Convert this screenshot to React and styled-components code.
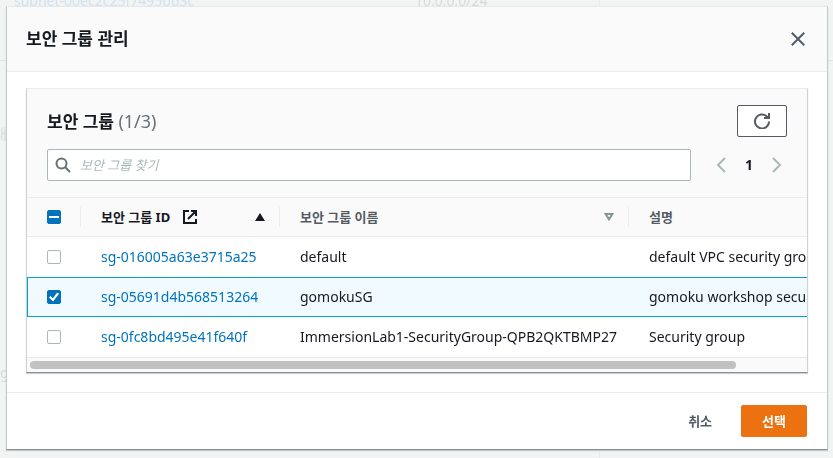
import { useRef, useState } from "react";
import styled, { createGlobalStyle, css } from "styled-components";

const groups = [
  {
    id: "sg-016005a63e3715a25",
    name: "default",
    description: "default VPC security group",
  },
  {
    id: "sg-05691d4b568513264",
    name: "gomokuSG",
    description: "gomoku workshop security group",
  },
  {
    id: "sg-0fc8bd495e41f640f",
    name: "ImmersionLab1-SecurityGroup-QPB2QKTBMP27",
    description: "Security group",
  },
];

export default function App() {
  const [selected, setSelected] = useState(["sg-05691d4b568513264"]);
  const [scroll, setScroll] = useState(0);
  const scroller = useRef(null);

  const toggle = (id) => {
    setSelected((prev) =>
      prev.includes(id) ? prev.filter((item) => item !== id) : [...prev, id]
    );
  };

  const toggleAll = () => {
    setSelected((prev) =>
      prev.length === groups.length ? [] : groups.map((group) => group.id)
    );
  };

  const allSelected = selected.length === groups.length;

  return (
    <>
      <GlobalStyle />
      <Backdrop aria-hidden="true">
        <BackdropRow>
          <BackdropLink>subnet-00ec2c25f7495bd3c</BackdropLink>
          <span>10.0.0.0/24</span>
          <BackdropDivider />
        </BackdropRow>
        <BackdropLabels>
          <span>대</span>
          <span>g</span>
        </BackdropLabels>
      </Backdrop>
      <Overlay>
        <Modal role="dialog" aria-labelledby="modal-title">
          <ModalHeader>
            <Title id="modal-title">보안 그룹 관리</Title>
            <IconButton aria-label="닫기">
              <svg width="16" height="16" viewBox="0 0 16 16">
                <path d="M1.8 1.8l12.4 12.4M14.2 1.8L1.8 14.2" {...stroke} />
              </svg>
            </IconButton>
          </ModalHeader>
          <ModalBody>
            <Card>
              <CardHeader>
                <TitleRow>
                  <Title>
                    보안 그룹 <Counter>({selected.length}/3)</Counter>
                  </Title>
                  <RefreshButton aria-label="새로 고침">
                    <svg width="16" height="16" viewBox="0 0 16 16">
                      <path
                        d="M15 8.5A7 7 0 1 1 12.6 3.2L14 4.6M15 0v5h-5"
                        {...stroke}
                      />
                    </svg>
                  </RefreshButton>
                </TitleRow>
                <FilterRow>
                  <SearchBox>
                    <svg width="16" height="16" viewBox="0 0 16 16">
                      <circle cx="6.5" cy="6.5" r="5" {...stroke} />
                      <path d="M10.2 10.2L15 15" {...stroke} />
                    </svg>
                    <input
                      type="text"
                      aria-label="보안 그룹 찾기"
                      placeholder="보안 그룹 찾기"
                    />
                  </SearchBox>
                  <Pagination aria-label="페이지">
                    <PageButton aria-label="이전" disabled>
                      <svg width="16" height="16" viewBox="0 0 16 16">
                        <path d="M12 1L5 8l7 7" {...stroke} />
                      </svg>
                    </PageButton>
                    <PageNumber>1</PageNumber>
                    <PageButton aria-label="다음" disabled>
                      <svg width="16" height="16" viewBox="0 0 16 16">
                        <path d="M4 1l7 7-7 7" {...stroke} />
                      </svg>
                    </PageButton>
                  </Pagination>
                </FilterRow>
              </CardHeader>
              <TableScroller
                ref={scroller}
                onScroll={() => {
                  const { scrollLeft, scrollWidth } = scroller.current;
                  setScroll((scrollLeft / scrollWidth) * 100);
                }}
              >
                <Table>
                  <colgroup>
                    <Col $width={53} />
                    <Col $width={199} />
                    <Col $width={349} />
                    <col />
                  </colgroup>
                  <thead>
                    <tr>
                      <HeadCell>
                        <Checkbox
                          type="checkbox"
                          aria-label="모두 선택"
                          checked={allSelected}
                          onChange={toggleAll}
                          $mixed={selected.length > 0 && !allSelected}
                        />
                      </HeadCell>
                      <HeadCell $divided $active aria-sort="ascending">
                        <HeadContent>
                          <span>보안 그룹 ID</span>
                          <svg width="16" height="16" viewBox="0 0 16 16">
                            <path
                              d="M7 2H2v12h12V10M9 2h5v5M14 2L6 10"
                              {...stroke}
                            />
                          </svg>
                          <SortIcon width="10" height="8" viewBox="0 0 10 8">
                            <path d="M5 0l5 8H0z" fill="currentColor" />
                          </SortIcon>
                        </HeadContent>
                      </HeadCell>
                      <HeadCell $divided>
                        <HeadContent>
                          <span>보안 그룹 이름</span>
                          <SortIcon width="10" height="8" viewBox="0 0 10 8">
                            <path
                              d="M1.6 1h6.8L5 6.4z"
                              fill="none"
                              stroke="#879596"
                              strokeWidth="2"
                            />
                          </SortIcon>
                        </HeadContent>
                      </HeadCell>
                      <HeadCell $divided>설명</HeadCell>
                    </tr>
                  </thead>
                  <tbody>
                    {groups.map((group) => (
                      <Row
                        key={group.id}
                        $selected={selected.includes(group.id)}
                      >
                        <Cell>
                          <Checkbox
                            type="checkbox"
                            aria-label={group.id}
                            checked={selected.includes(group.id)}
                            onChange={() => toggle(group.id)}
                          />
                        </Cell>
                        <Cell>
                          <GroupLink href={`#${group.id}`}>{group.id}</GroupLink>
                        </Cell>
                        <Cell>{group.name}</Cell>
                        <Cell>{group.description}</Cell>
                      </Row>
                    ))}
                  </tbody>
                </Table>
              </TableScroller>
              <ScrollTrack>
                <ScrollThumb style={{ marginLeft: `${scroll}%` }} />
              </ScrollTrack>
            </Card>
          </ModalBody>
          <ModalFooter>
            <Button>취소</Button>
            <Button $primary>선택</Button>
          </ModalFooter>
        </Modal>
      </Overlay>
    </>
  );
}

const stroke = {
  fill: "none",
  stroke: "currentColor",
  strokeWidth: 2,
};

const GlobalStyle = createGlobalStyle`
  * {
    box-sizing: border-box;
  }
  body {
    margin: 0;
    background-color: #f2f3f3;
    color: #16191f;
    font-family: "Noto Sans", "Noto Sans CJK KR", sans-serif;
    font-size: 14px;
    line-height: 20px;
  }
  button,
  input {
    font: inherit;
  }
  svg {
    display: block;
    flex-shrink: 0;
  }
`;

const Backdrop = styled.div`
  position: fixed;
  inset: 0;
  overflow: hidden;
  color: #d5dbdb;
`;

const BackdropRow = styled.div`
  display: grid;
  grid-template-columns: 401px 184px 1fr;
  height: 61px;
  padding-left: 14px;
  border-bottom: 1px solid #e0e4e4;
  line-height: 2px;
`;

const BackdropLink = styled.span`
  color: #cfe2f0;
`;

const BackdropDivider = styled.div`
  height: 100vh;
  border-left: 1px solid #e9ebeb;
`;

const BackdropLabels = styled.div`
  display: flex;
  flex-direction: column;
  gap: 219px;
  padding-top: 63px;
  span:first-child {
    margin-left: -6px;
  }
`;

const Overlay = styled.div`
  position: relative;
  padding: 6px 5px 8px 6px;
`;

const Modal = styled.section`
  background-color: #ffffff;
  border: 1px solid #c4cbcb;
  border-top-color: #e3e8e8;
  border-bottom-color: #879196;
  box-shadow: 0 1px 1px rgba(0, 28, 36, 0.2);
`;

const ModalHeader = styled.header`
  display: flex;
  align-items: center;
  justify-content: space-between;
  height: 65px;
  padding: 0 21px 0 19px;
  background-color: #fafafa;
  border-bottom: 1px solid #eaeded;
`;

const Title = styled.h2`
  margin: 0;
  font-size: 17px;
  line-height: 24px;
  font-weight: 700;
`;

const Counter = styled.span`
  color: #687078;
  font-size: 18px;
  font-weight: 400;
`;

const IconButton = styled.button`
  padding: 0;
  border: 0;
  background: none;
  color: #545b64;
  cursor: pointer;
`;

const ModalBody = styled.div`
  padding: 16px 19px 19px;
`;

const Card = styled.div`
  border: 1px solid #cdd2d2;
  border-top-color: #eaeded;
  border-bottom-color: #879196;
  box-shadow: 0 1px 1px rgba(0, 28, 36, 0.2);
`;

const CardHeader = styled.div`
  padding: 16px 20px;
  background-color: #fafafa;
  border-bottom: 1px solid #eaeded;
`;

const TitleRow = styled.div`
  display: flex;
  align-items: center;
  justify-content: space-between;
  margin-bottom: 12px;
`;

const RefreshButton = styled.button`
  display: flex;
  align-items: center;
  justify-content: center;
  width: 50px;
  height: 32px;
  border: 1px solid #545b64;
  border-radius: 2px;
  background-color: #ffffff;
  color: #545b64;
  cursor: pointer;
`;

const FilterRow = styled.div`
  display: flex;
  align-items: center;
  gap: 20px;
`;

const SearchBox = styled.label`
  display: flex;
  flex: 1;
  align-items: center;
  gap: 9px;
  height: 32px;
  padding: 0 7px;
  border: 1px solid #aab7b8;
  border-radius: 2px;
  background-color: #ffffff;
  color: #687078;
  input {
    flex: 1;
    min-width: 0;
    padding: 0;
    border: 0;
    outline: 0;
    background: none;
    color: #16191f;
    font-size: 13px;
  }
  input::placeholder {
    color: #aab7b8;
    font-style: italic;
    opacity: 1;
  }
`;

const Pagination = styled.nav`
  display: flex;
  align-items: center;
  justify-content: space-between;
  width: 76px;
  padding: 0 2px;
`;

const PageButton = styled(IconButton)`
  color: #aab7b8;
`;

const PageNumber = styled.span`
  font-weight: 700;
`;

const TableScroller = styled.div`
  overflow-x: auto;
  scrollbar-width: none;
`;

const Table = styled.table`
  width: 100%;
  min-width: 855px;
  table-layout: fixed;
  border-collapse: separate;
  border-spacing: 0;
`;

const Col = styled.col`
  width: ${({ $width }) => $width}px;
`;

const HeadCell = styled.th`
  position: relative;
  height: 39px;
  padding: 0 14px 0 20px;
  background-color: #fafafa;
  border-bottom: 1px solid #eaeded;
  color: ${({ $active }) => ($active ? "#16191f" : "#545b64")};
  font-size: 13px;
  font-weight: 700;
  text-align: left;
  ${({ $divided }) =>
    $divided &&
    css`
      padding-left: 21px;
      &::before {
        content: "";
        position: absolute;
        top: 9px;
        bottom: 9px;
        left: 0;
        border-left: 1px solid #eaeded;
      }
    `}
`;

const HeadContent = styled.div`
  display: flex;
  align-items: center;
  gap: 12px;
`;

const SortIcon = styled.svg`
  margin-left: auto;
`;

const Cell = styled.td`
  height: 40px;
  padding: 0 21px;
  border: 0 solid transparent;
  border-width: 1px 0;
  white-space: nowrap;
  &:first-child {
    padding-left: 20px;
  }
`;

const Row = styled.tr`
  ${({ $selected }) =>
    $selected &&
    css`
      background-color: #f1faff;
      ${Cell} {
        border-color: #00a1c9;
      }
      ${Cell}:first-child {
        border-left-width: 1px;
        padding-left: 19px;
      }
    `}
`;

const GroupLink = styled.a`
  color: #0073bb;
  text-decoration: none;
  &:hover {
    text-decoration: underline;
  }
`;

const Checkbox = styled.input`
  display: grid;
  place-items: center;
  appearance: none;
  width: 14px;
  height: 14px;
  margin: 0;
  border: 1px solid ${({ $mixed }) => ($mixed ? "#0073bb" : "#aab7b8")};
  border-radius: 2px;
  background-color: ${({ $mixed }) => ($mixed ? "#0073bb" : "#ffffff")};
  &:checked {
    border-color: #0073bb;
    background-color: #0073bb;
  }
  &:checked::before {
    content: "";
    width: 10px;
    height: 10px;
    background-color: #ffffff;
    clip-path: polygon(0 55%, 15% 40%, 38% 62%, 82% 4%, 100% 18%, 41% 94%);
  }
  ${({ $mixed }) =>
    $mixed &&
    css`
      &::before {
        content: "";
        width: 10px;
        height: 2px;
        background-color: #ffffff;
      }
    `}
`;

const ScrollTrack = styled.div`
  height: 15px;
  padding: 3px;
  background-color: #fafafa;
  border-top: 1px solid #e8e8e8;
`;

const ScrollThumb = styled.div`
  width: 91.2%;
  height: 8px;
  border-radius: 4px;
  background-color: #c1c1c1;
`;

const ModalFooter = styled.footer`
  display: flex;
  justify-content: flex-end;
  gap: 8px;
  padding: 12px 20px;
  border-top: 1px solid #eaeded;
`;

const Button = styled.button`
  height: 32px;
  padding: 0 20px;
  border: 1px solid ${({ $primary }) => ($primary ? "#ec7211" : "transparent")};
  border-radius: 2px;
  background-color: ${({ $primary }) => ($primary ? "#ec7211" : "transparent")};
  color: ${({ $primary }) => ($primary ? "#ffffff" : "#545b64")};
  font-size: 13px;
  font-weight: 700;
  cursor: pointer;
`;
